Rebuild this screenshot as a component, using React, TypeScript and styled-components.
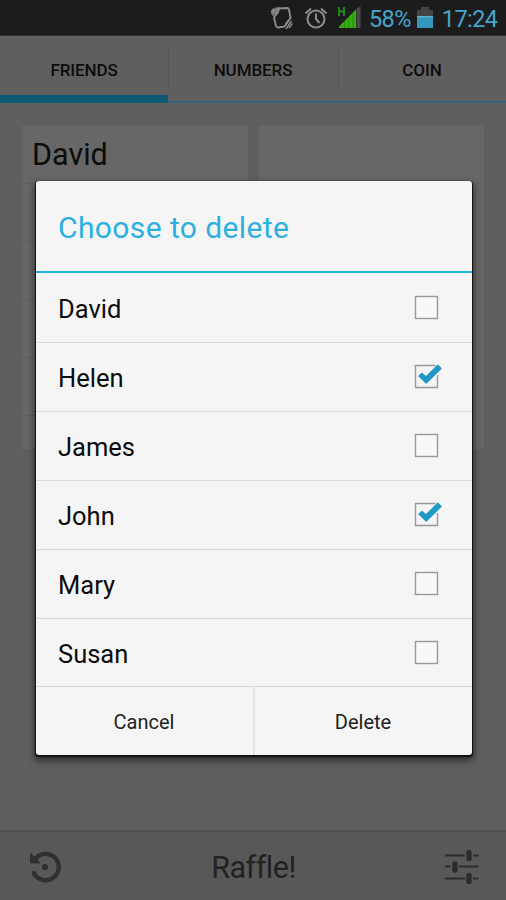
import React from 'react';
import styled, { createGlobalStyle } from 'styled-components';

const Global = createGlobalStyle`
  *, *::before, *::after { box-sizing: border-box; }
  body { margin: 0; background: #5e5e5e; }
  button { border: 0; padding: 0; background: none; font: inherit; color: inherit; }
`;

const Screen = styled.div`
  position: relative;
  width: 506px;
  height: 900px;
  display: flex;
  flex-direction: column;
  overflow: hidden;
  background: #5f5f5f;
  font-family: Roboto, "Liberation Sans", sans-serif;
  font-variant-ligatures: none;
  color: #0c0c0c;
`;

const StatusBar = styled.header`
  height: 36px;
  flex: none;
  display: flex;
  align-items: center;
  padding-left: 270px;
  background: #1c1c1c;
  border-bottom: 1px solid #303030;
  color: #45a5cb;
`;

const StatusText = styled.span<{ $gap: number; $spacing: number }>`
  margin-left: ${(p) => p.$gap}px;
  font-size: 23.5px;
  line-height: 36px;
  letter-spacing: ${(p) => p.$spacing}px;
  white-space: nowrap;
  padding-top: 2px;
`;

const Tabs = styled.nav`
  height: 67px;
  flex: none;
  display: grid;
  grid-template-columns: 168px 170px 168px;
`;

const Tab = styled.button<{ $active?: boolean }>`
  position: relative;
  display: flex;
  justify-content: center;
  padding-top: 24px;
  font-size: 17px;
  line-height: 20px;
  font-weight: 500;
  letter-spacing: -0.1px;
  border-bottom: ${(p) => (p.$active ? '8px solid #0f5a73' : '2px solid #35657d')};
  &:not(:first-child)::before {
    content: '';
    position: absolute;
    left: 0;
    top: 12px;
    width: 1px;
    height: 44px;
    background: #575757;
  }
`;

const Content = styled.main`
  flex: 1;
  display: grid;
  grid-template-columns: 226px 225px;
  column-gap: 11px;
  align-content: start;
  padding: 23px 22px 0;
`;

const Card = styled.section`
  height: 323px;
  background: #676767;
  overflow: hidden;
`;

const CardRow = styled.div`
  height: 58px;
  padding-left: 10px;
  border-bottom: 1px solid #5e5e5e;
  font-size: 30.5px;
  line-height: 58px;
`;

const BottomBar = styled.footer`
  height: 70px;
  flex: none;
  display: flex;
  align-items: center;
  justify-content: space-between;
  padding: 2px 26px 0 27px;
  background: #585858;
  border-top: 2px solid #4e4e4e;
  color: #222;
`;

const Raffle = styled.button`
  padding-top: 2px;
  font-size: 30.5px;
  line-height: 40px;
  letter-spacing: -0.5px;
`;

const Scrim = styled.div`
  position: absolute;
  inset: 0;
  display: flex;
  justify-content: center;
  align-items: flex-start;
  padding: 181px 0 0 1px;
`;

const Dialog = styled.section`
  width: 436px;
  height: 574px;
  display: flex;
  flex-direction: column;
  border-radius: 3px;
  background: #f5f5f5;
  box-shadow: 0 1px 1px 1px #111, 0 4px 7px 2px rgba(0, 0, 0, 0.5);
`;

const Title = styled.h1`
  margin: 0;
  height: 92px;
  flex: none;
  padding: 2px 0 0 22.5px;
  border-bottom: 2px solid #1fb0de;
  font-size: 30px;
  font-weight: 400;
  line-height: 90px;
  letter-spacing: 0.4px;
  color: #2bb0df;
`;

const Option = styled.label`
  height: 69px;
  flex: none;
  display: flex;
  align-items: center;
  justify-content: space-between;
  padding: 1px 24px 0 22.5px;
  font-size: 25.5px;
  line-height: 36px;
  & + & {
    border-top: 1px solid #dadada;
    padding-top: 0;
  }
`;

const OptionName = styled.span`
  padding-top: 2px;
`;

const Actions = styled.div`
  flex: 1;
  display: grid;
  grid-template-columns: 217px 1fr;
  margin-top: -1px;
  border-top: 1px solid #d9d9d9;
`;

const Action = styled.button`
  font-size: 20px;
  color: #222;
  padding-top: 1px;
  & + & {
    border-left: 2px solid #e4e4e4;
  }
`;

const VibrateIcon = () => (
  <svg width="24" height="26" viewBox="0 0 24 26" fill="none" stroke="#8c8c8c">
    <path d="M9.500 3.500 17 3Q18.500 3 19 4.500L20.500 13 14.500 21.500 8 22.500Q6.500 22.500 6 21L4 12.500Z" strokeLinejoin="round" strokeWidth="1.900" />
    <path d="M8.500 6 6 10M18.500 15.500 15.500 19.500" strokeWidth="2" />
    <path d="M6.500 2.500 1.500 9M4 3.500 1 7M9 2 2.500 10.500M21.500 16 16 24M22.500 18.500 19 23" strokeWidth="1.400" />
  </svg>
);

const AlarmIcon = () => (
  <svg width="24" height="24" viewBox="0 0 24 24" fill="none" stroke="#8c8c8c" strokeWidth="2">
    <circle cx="12" cy="13" r="8.5" />
    <path d="M12 7.5V13l3.5 4M1.5 7.5 7 2.5M22.5 7.5 17 2.5" />
  </svg>
);

const SignalIcon = () => (
  <svg width="25" height="24" viewBox="0 0 25 24">
    <path d="M1 1v9M6 1v9M1 5.5h5" fill="none" stroke="#278a1b" strokeWidth="1.800" />
    <path d="M1 22V20.500L18 3.500V22Z" fill="#35b013" />
    <path d="M6.500 15v7M11 11v11M15 7v15" stroke="#278913" />
    <path d="M18.500 3 22.500 0V22H18.500Z" fill="#484848" />
  </svg>
);

const BatteryIcon = () => (
  <svg width="16" height="24" viewBox="0 0 16 24">
    <path d="M0 4h4V1h8v3h4v8H0Z" fill="#444" />
    <path d="M0 10h16v12H0Z" fill="#3596bd" />
    <path d="M0 10h16v1.500H0Z" fill="#5baecb" />
  </svg>
);

const HistoryIcon = () => (
  <svg width="36" height="36" viewBox="0 0 36 36" fill="none">
    <path d="M8.500 9.500A13.200 13.200 0 1 1 6.800 24" stroke="#303030" strokeWidth="4.400" strokeLinecap="round" />
    <path d="M3.500 4V14H13Z" fill="#303030" stroke="#303030" strokeLinejoin="round" />
    <circle cx="18" cy="18" r="3.100" fill="#303030" />
  </svg>
);

const SlidersIcon = () => (
  <svg width="36" height="36" viewBox="0 0 36 36" fill="none" stroke="#2c2c2c">
    <path d="M1 6.500H21M29 6.500H34.500M1 17.500H6M15 17.500H34.500M1 29.500H21M29 29.500H34.500" strokeWidth="1.800" />
    <path d="M25 3.500V9.500M11 15V21M25 26.500V32.500" strokeWidth="5.500" strokeLinecap="round" />
  </svg>
);

const Checkbox = ({ checked }: { checked: boolean }) => (
  <svg width="36" height="32" viewBox="0 0 36 32" role="checkbox" aria-checked={checked}>
    {checked ? (
      <>
        <path d="M23.500 4.500H3.500V26.500H25.500V14" fill="none" stroke="#999" strokeWidth="1.400" />
        <path d="M7 15 10 12.500 14 16 25.800 4.300 29 7.500 14.200 22Z" fill="#2198c5" stroke="#2198c5" strokeWidth="1.400" strokeLinejoin="round" />
      </>
    ) : (
      <rect x="3.500" y="4.500" width="22" height="22" fill="#f8f8f8" stroke="#999" strokeWidth="1.400" />
    )}
  </svg>
);

const options = [
  { name: 'David', checked: false },
  { name: 'Helen', checked: true },
  { name: 'James', checked: false },
  { name: 'John', checked: true },
  { name: 'Mary', checked: false },
  { name: 'Susan', checked: false },
];

const StatusIcons = styled.div`
  display: flex;
  align-items: center;
  gap: 10px;
`;

const BatterySlot = styled.span`
  display: flex;
  margin-left: 6px;
`;

export default function App() {
  return (
    <>
      <Global />
      <Screen>
        <StatusBar>
          <StatusIcons>
            <VibrateIcon />
            <AlarmIcon />
            <SignalIcon />
          </StatusIcons>
          <StatusText $gap={6} $spacing={-0.6}>58%</StatusText>
          <BatterySlot><BatteryIcon /></BatterySlot>
          <StatusText $gap={9} $spacing={-0.6}>17:24</StatusText>
        </StatusBar>
        <Tabs>
          <Tab $active>FRIENDS</Tab>
          <Tab>NUMBERS</Tab>
          <Tab>COIN</Tab>
        </Tabs>
        <Content>
          <Card>
            <CardRow>David</CardRow>
            <CardRow />
            <CardRow />
            <CardRow />
            <CardRow />
          </Card>
          <Card />
        </Content>
        <BottomBar>
          <HistoryIcon />
          <Raffle>Raffle!</Raffle>
          <SlidersIcon />
        </BottomBar>
        <Scrim>
          <Dialog role="dialog">
            <Title>Choose to delete</Title>
            {options.map((o) => (
              <Option key={o.name}>
                <OptionName>{o.name}</OptionName>
                <Checkbox checked={o.checked} />
              </Option>
            ))}
            <Actions>
              <Action>Cancel</Action>
              <Action>Delete</Action>
            </Actions>
          </Dialog>
        </Scrim>
      </Screen>
    </>
  );
}
